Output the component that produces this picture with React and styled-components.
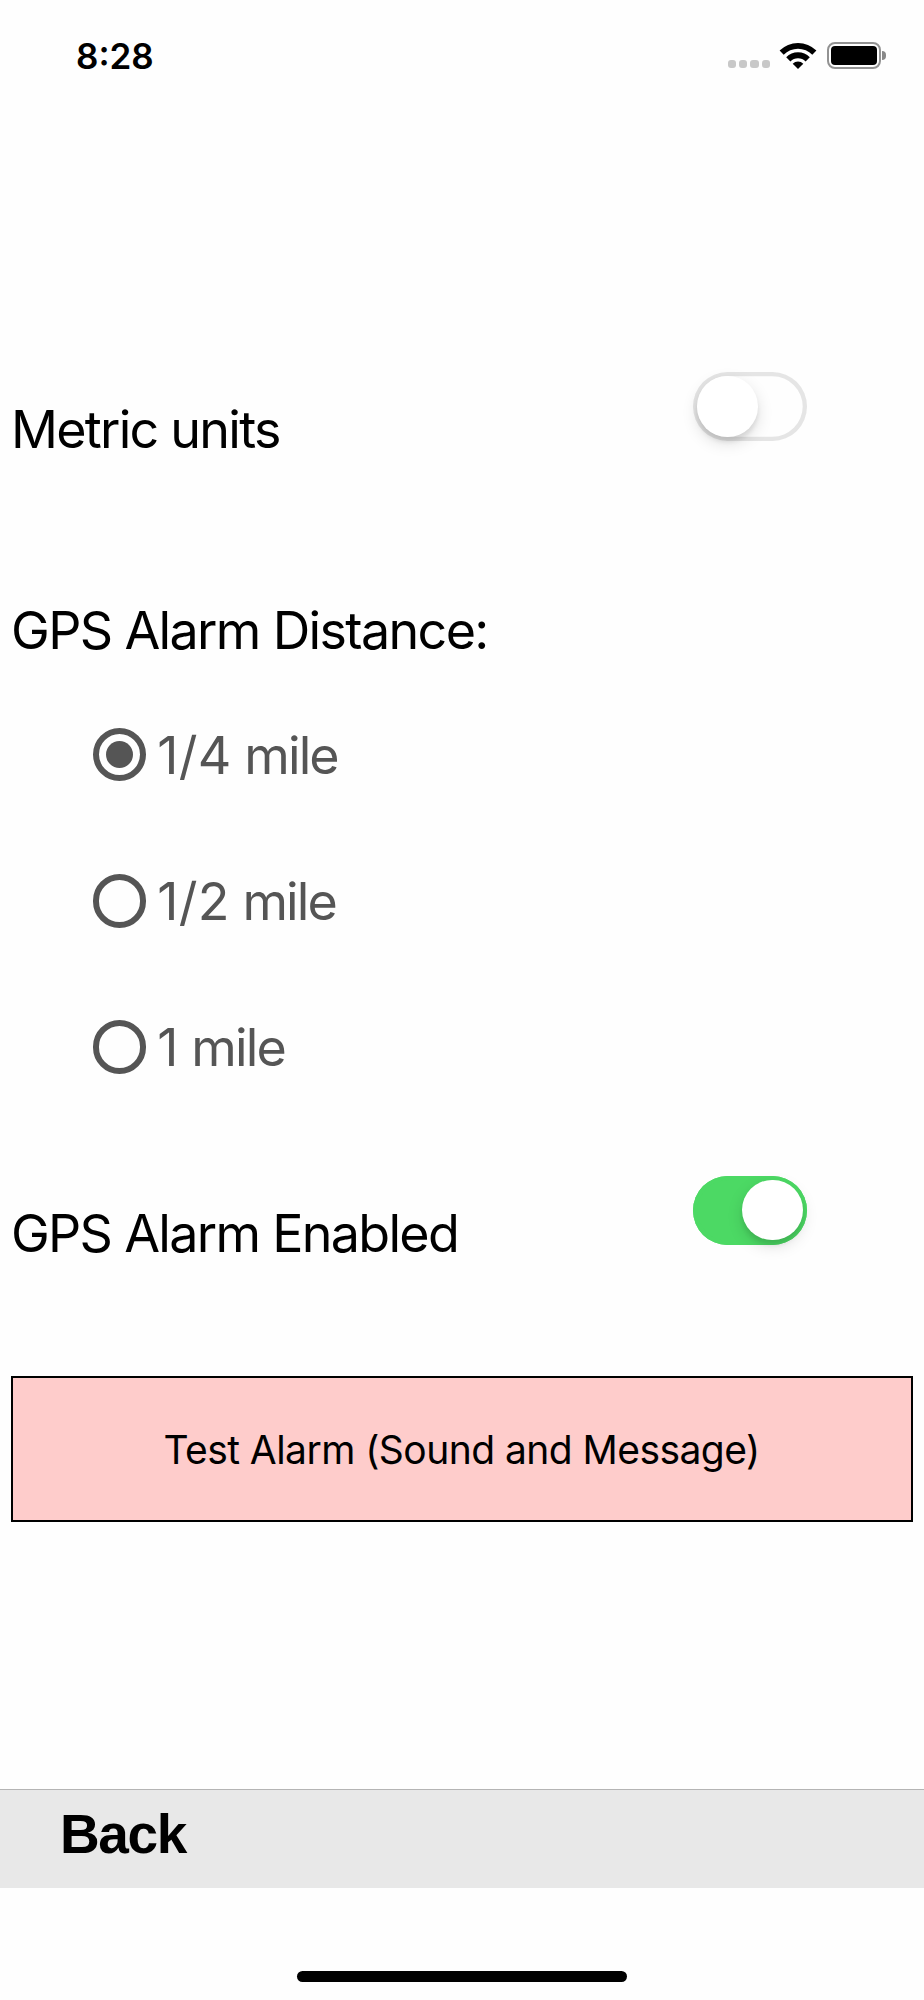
import { useState } from "react";
import styled, { createGlobalStyle } from "styled-components";

const distances = ["1/4", "1/2", "1"];

export default function App() {
  const [metric, setMetric] = useState(false);
  const [enabled, setEnabled] = useState(true);
  const [distance, setDistance] = useState("1/4");

  return (
    <>
      <GlobalStyle />
      <Screen>
        <StatusBar>
          <Clock>8:28</Clock>
          <StatusIcons>
            <SignalDots>
              <i /><i /><i /><i />
            </SignalDots>
            <WifiIcon />
            <Battery><span /></Battery>
            <BatteryTip />
          </StatusIcons>
        </StatusBar>

        <Settings>
          <SwitchRow>
            <Label $spacing="-1.75px">Metric units</Label>
            <Switch role="switch" aria-checked={metric} $on={metric} onClick={() => setMetric(!metric)}>
              <Knob />
            </Switch>
          </SwitchRow>

          <DistanceTitle $spacing="-1.65px">GPS Alarm Distance:</DistanceTitle>
          <RadioList>
            {distances.map((item) => (
              <RadioRow key={item} onClick={() => setDistance(item)}>
                <RadioCircle>{distance === item && <RadioDot />}</RadioCircle>
                <Label $color="#555" $spacing="-1.9px"><Amount>{item}</Amount> mile</Label>
              </RadioRow>
            ))}
          </RadioList>

          <SwitchRow>
            <Label $spacing="-1.7px">GPS Alarm Enabled</Label>
            <Switch role="switch" aria-checked={enabled} $on={enabled} onClick={() => setEnabled(!enabled)}>
              <Knob />
            </Switch>
          </SwitchRow>

          <TestButton>Test Alarm (Sound and Message)</TestButton>
        </Settings>

        <Footer>
          <BackButton>Back</BackButton>
        </Footer>
        <HomeArea>
          <HomeIndicator />
        </HomeArea>
      </Screen>
    </>
  );
}

function WifiIcon() {
  return (
    <Wifi viewBox="0 0 40 28">
      <path d="M1.6 8.6A26 26 0 0 1 38.4 8.6L34.3 12.7A20 20 0 0 0 5.7 12.7Z" />
      <path d="M8.2 15.2A16.8 16.8 0 0 1 31.8 15.2L27.6 19.4A10.8 10.8 0 0 0 12.4 19.4Z" />
      <path d="M14.7 21.7A7.5 7.5 0 0 1 25.3 21.7L20 27Z" />
    </Wifi>
  );
}

const GlobalStyle = createGlobalStyle`
  * {
    box-sizing: border-box;
  }

  body {
    margin: 0;
    background-color: #fefefe;
    font-family: Inter, "Liberation Sans", sans-serif;
  }

  button {
    padding: 0;
    border: none;
    font-family: inherit;
    cursor: pointer;
  }
`;

const Screen = styled.div`
  display: flex;
  flex-direction: column;
  width: 924px;
  height: 2000px;
  background-color: #fefefe;
  color: #000;
`;

const StatusBar = styled.header`
  display: flex;
  align-items: center;
  justify-content: space-between;
  height: 111px;
  padding: 0 38.4px 0 76px;
`;

const Clock = styled.span`
  font-size: 35px;
  font-weight: 600;
  line-height: 42px;
`;

const StatusIcons = styled.div`
  display: flex;
  align-items: center;
`;

const SignalDots = styled.div`
  display: flex;
  align-self: flex-end;
  gap: 3px;
  margin: 0 8px 1.2px 0;

  i {
    width: 8.3px;
    height: 8.5px;
    border-radius: 3px;
    background-color: #c8c8c8;
  }
`;

const Wifi = styled.svg`
  width: 40px;
  height: 28px;
  margin-right: 8.8px;
  fill: #000;
`;

const Battery = styled.div`
  width: 54px;
  height: 27.5px;
  padding: 2.2px;
  border: 2px solid #929292;
  border-radius: 8px;

  span {
    display: block;
    height: 100%;
    border-radius: 4px;
    background-color: #000;
  }
`;

const BatteryTip = styled.div`
  width: 3.5px;
  height: 9px;
  margin-left: 1.3px;
  border-radius: 0 4px 4px 0;
  background-color: #888;
`;

const Settings = styled.main`
  display: flex;
  flex-direction: column;
  height: 1678px;
  padding: 261px 11px 0;
`;

const SwitchRow = styled.div`
  display: flex;
  align-items: flex-start;
  justify-content: space-between;
  height: 89px;
  padding-right: 106px;

  > span {
    align-self: flex-end;
  }
`;

const Label = styled.span`
  color: ${({ $color }) => $color || "#000"};
  font-size: 52px;
  font-weight: 400;
  line-height: 62px;
  letter-spacing: ${({ $spacing }) => $spacing || 0};
  white-space: nowrap;
`;

const Amount = styled.span`
  letter-spacing: 0.3px;
`;

const DistanceTitle = styled(Label)`
  margin-top: 138.5px;
`;

const Switch = styled.button`
  display: flex;
  align-items: center;
  justify-content: ${({ $on }) => ($on ? "flex-end" : "flex-start")};
  width: 114px;
  height: 69px;
  padding: 0 4.3px;
  border-radius: 35px;
  background-color: ${({ $on }) => ($on ? "#4cd964" : "#fefefe")};
  box-shadow: inset 0 0 0 4.3px ${({ $on }) => ($on ? "#4cd964" : "#e5e5e5")};
`;

const Knob = styled.span`
  width: 60.6px;
  height: 60.6px;
  border-radius: 50%;
  background-color: #fff;
  box-shadow: 0 6px 16px rgba(0, 0, 0, 0.13), 0 5px 4px rgba(0, 0, 0, 0.08);
`;

const RadioList = styled.div`
  display: flex;
  flex-direction: column;
  gap: 82.2px;
  margin: 61.2px 0 96.5px;
  padding-left: 81.6px;
`;

const RadioRow = styled.div`
  display: flex;
  align-items: center;
  gap: 11px;
  height: 64px;
  cursor: pointer;

  > span {
    padding-top: 2px;
  }
`;

const RadioCircle = styled.div`
  display: flex;
  align-items: center;
  justify-content: center;
  width: 53.6px;
  height: 53.6px;
  border: 6px solid #555;
  border-radius: 50%;
`;

const RadioDot = styled.div`
  width: 27px;
  height: 27px;
  border-radius: 50%;
  background-color: #555;
`;

const TestButton = styled.button`
  height: 146px;
  margin-top: 111.8px;
  padding-right: 1px;
  border: 2px solid #000;
  background-color: #fecccb;
  color: #000;
  font-size: 39px;
  line-height: 47px;
  letter-spacing: -0.55px;
`;

const Footer = styled.footer`
  display: flex;
  align-items: flex-start;
  height: 99px;
  padding: 13px 0 0 60px;
  border-top: 1px solid #b4b4b4;
  background-color: #e8e8e8;
`;

const BackButton = styled.button`
  background: none;
  color: #000;
  font-family: "Liberation Sans", Arial, sans-serif;
  font-size: 55px;
  font-weight: 700;
  line-height: 62px;
  letter-spacing: -1.4px;
`;

const HomeArea = styled.div`
  display: flex;
  flex: 1;
  align-items: flex-end;
  justify-content: center;
  padding-bottom: 18px;
`;

const HomeIndicator = styled.div`
  width: 330px;
  height: 11px;
  border-radius: 6px;
  background-color: #000;
`;
